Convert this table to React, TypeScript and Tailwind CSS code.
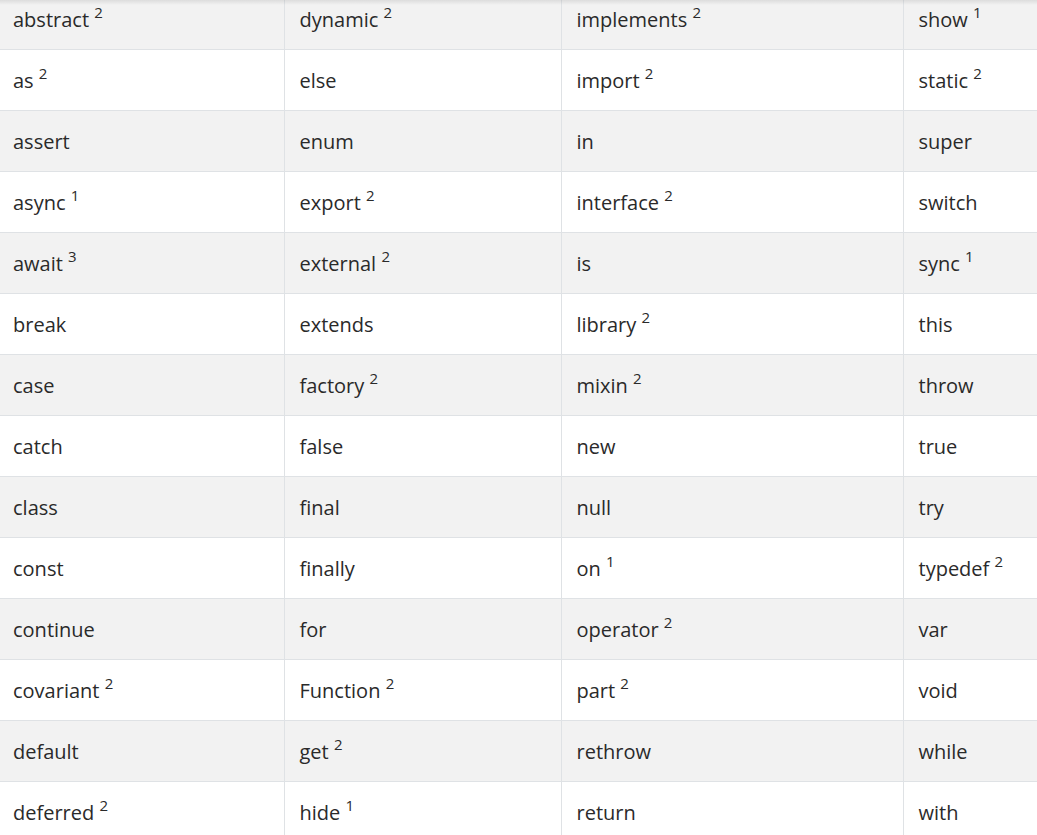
type Cell = [string, number?];

const rows: Cell[][] = [
  [["abstract", 2], ["dynamic", 2], ["implements", 2], ["show", 1]],
  [["as", 2], ["else"], ["import", 2], ["static", 2]],
  [["assert"], ["enum"], ["in"], ["super"]],
  [["async", 1], ["export", 2], ["interface", 2], ["switch"]],
  [["await", 3], ["external", 2], ["is"], ["sync", 1]],
  [["break"], ["extends"], ["library", 2], ["this"]],
  [["case"], ["factory", 2], ["mixin", 2], ["throw"]],
  [["catch"], ["false"], ["new"], ["true"]],
  [["class"], ["final"], ["null"], ["try"]],
  [["const"], ["finally"], ["on", 1], ["typedef", 2]],
  [["continue"], ["for"], ["operator", 2], ["var"]],
  [["covariant", 2], ["Function", 2], ["part", 2], ["void"]],
  [["default"], ["get", 2], ["rethrow"], ["while"]],
  [["deferred", 2], ["hide", 1], ["return"], ["with"]],
];

const widths = ["w-[284px]", "w-[277px]", "w-[342px]", "w-[134px]"];

export default function App() {
  return (
    <div
      className="relative h-[835px] w-[1037px] overflow-hidden bg-white text-[20px] text-[#2a2a2a]"
      style={{ fontFamily: '"Open Sans", "Noto Sans", sans-serif' }}
    >
      <div className="pointer-events-none absolute inset-x-0 top-0 z-10 h-[5px] bg-[linear-gradient(180deg,rgba(0,0,0,0.09),rgba(0,0,0,0))]" />
      <table className="-mt-[12px] w-[1037px] table-fixed border-collapse">
        <colgroup>
          {widths.map((w) => (
            <col key={w} className={w} />
          ))}
        </colgroup>
        <tbody>
          {rows.map((row, i) => (
            <tr key={i} className={i % 2 === 0 ? "bg-[#f2f2f2]" : "bg-white"}>
              {row.map(([word, sup], j) => (
                <td
                  key={j}
                  className={
                    "h-[61px] border-r border-b border-[#dfe2e5] pt-[3px] pr-[13px] align-middle leading-[30px] last:border-r-0 " +
                    (j === 0 ? "pl-[13px]" : "pl-[15px]")
                  }
                >
                  {word}
                  {sup !== undefined && (
                    <>
                      {" "}
                      <sup className="relative -top-[9px] text-[15px]">{sup}</sup>
                    </>
                  )}
                </td>
              ))}
            </tr>
          ))}
        </tbody>
      </table>
    </div>
  );
}
